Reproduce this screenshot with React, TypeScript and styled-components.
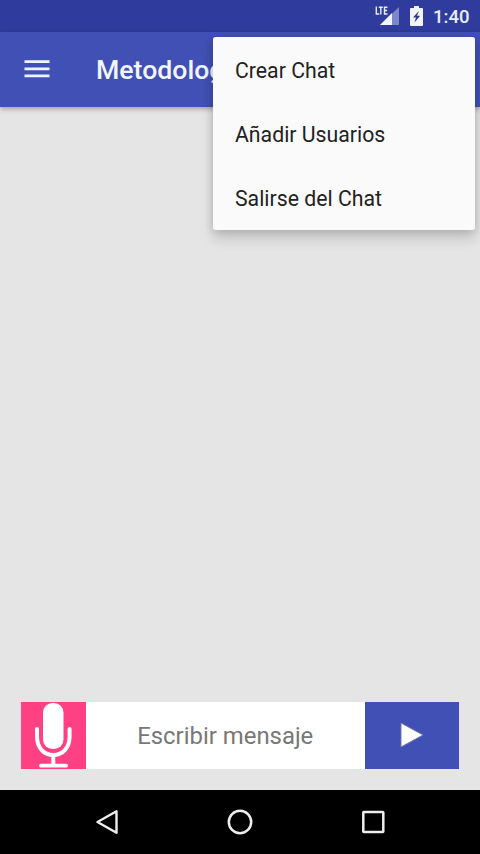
import React from "react";
import styled, { createGlobalStyle } from "styled-components";

const GlobalStyle = createGlobalStyle`
  * { box-sizing: border-box; }
  body { margin: 0; overflow: hidden; font-family: Roboto, "Noto Sans", sans-serif; }
  button { border: 0; padding: 0; background: none; font: inherit; color: inherit; }
  svg { display: block; flex: none; }
`;

const Screen = styled.div`
  position: relative;
  width: 480px;
  height: 854px;
  display: flex;
  flex-direction: column;
  background: #e5e5e5;
`;

const StatusBar = styled.header`
  height: 32px;
  flex: none;
  display: flex;
  align-items: center;
  justify-content: flex-end;
  padding-right: 11px;
  background: #303c9d;
  color: #e9eefc;
`;

const Signal = styled.svg`
  margin-right: 10px;
`;

const Clock = styled.span`
  margin-left: 10px;
  width: 36px;
  padding-top: 1px;
  font-size: 18.5px;
  font-weight: 500;
  line-height: 32px;
  white-space: nowrap;
`;

const AppBar = styled.div`
  height: 74.5px;
  flex: none;
  display: flex;
  align-items: center;
  padding-left: 24px;
  background: #4150b4;
  box-shadow: 0 2px 5px rgba(0, 0, 0, 0.3);
`;

const MenuButton = styled.button`
  width: 26px;
  height: 20px;
`;

const Title = styled.h1`
  margin: 2px 0 0 46px;
  color: #f2f6ff;
  font-size: 26.67px;
  font-weight: 500;
  line-height: 32px;
`;

const Conversation = styled.main`
  flex: 1;
`;

const Composer = styled.form`
  height: 67px;
  flex: none;
  display: flex;
  margin: 0 21px 21px;
`;

const MicButton = styled.button`
  width: 64.5px;
  background: #ff4083;
`;

const MessageInput = styled.input`
  width: 279.5px;
  min-width: 0;
  border: 0;
  padding: 1px 0 0;
  outline: 0;
  background: #fff;
  text-align: center;
  font-family: Roboto, "Noto Sans", sans-serif;
  font-size: 23.9px;
  &::placeholder { color: #777; opacity: 1; }
`;

const SendButton = styled.button`
  flex: 1;
  display: flex;
  align-items: center;
  justify-content: center;
  padding-bottom: 1px;
  background: #4150b4;
`;

const NavBar = styled.nav`
  height: 64px;
  flex: none;
  display: flex;
  align-items: center;
  justify-content: center;
  gap: 105.5px;
  background: #000;
`;

const NavButton = styled.button`
  width: 28px;
  height: 28px;
`;

const PopupMenu = styled.ul`
  position: absolute;
  top: 37px;
  right: 5px;
  width: 262px;
  height: 192.5px;
  margin: 0;
  padding: 0;
  list-style: none;
  background: #fafafa;
  border-radius: 2.5px;
  box-shadow: 0 9px 13px rgba(0, 0, 0, 0.14), 0 1px 8px rgba(0, 0, 0, 0.16);
`;

const PopupItem = styled.li`
  height: 64px;
  padding: 2px 22px 0;
  color: #222;
  font-size: 21.25px;
  line-height: 64px;
`;

const actions = ["Crear Chat", "Añadir Usuarios", "Salirse del Chat"];

export default function App() {
  return (
    <>
      <GlobalStyle />
      <Screen>
        <StatusBar>
          <Signal width="25" height="22" viewBox="0 0 25 22">
            <path d="M24 2v18H5z" fill="#7d87c9" />
            <path d="M17 8v12H5z" fill="#f1f5ff" />
            <path d="M0 0h13v10H0z" fill="#303c9d" />
            <path
              d="M1.300 1.600v7.400h3M3.800 2.200h4M5.800 2.200V9.600M12.400 2.200H9.500V9h3M9.500 5.500h2.600"
              fill="none"
              stroke="#e9eefc"
              strokeWidth="1.4"
            />
          </Signal>
          <svg width="13" height="20" viewBox="0 0 13 20">
            <path d="M4 0h5v2h3q1 0 1 1v16q0 1-1 1H1q-1 0-1-1V3q0-1 1-1h3z" fill="#f1f5ff" />
            <path d="M8.8 5L3 11.6h3L4.5 16.5L10.2 9.8H7z" fill="#303c7d" />
          </svg>
          <Clock>1:40</Clock>
        </StatusBar>
        <AppBar>
          <MenuButton aria-label="Menú">
            <svg width="26" height="20" viewBox="0 0 26 20">
              <path d="M.5 2.7h25M.5 9.8h25M.5 16.9h25" stroke="#eef3ff" strokeWidth="2.7" />
            </svg>
          </MenuButton>
          <Title>Metodolog</Title>
        </AppBar>
        <Conversation />
        <Composer>
          <MicButton type="button" aria-label="Grabar">
            <svg width="64" height="67" viewBox="0 0 64 67">
              <rect x="22" y="1" width="20.5" height="46" rx="9.5" fill="#fff" />
              <path
                d="M16 27v7.500c0 11 6.500 18.500 16.300 18.500s16.300-7.500 16.300-18.500V27M32.300 53v9"
                fill="none"
                stroke="#fff"
                strokeWidth="4"
                strokeLinecap="round"
              />
              <path d="M20 63.700h25" stroke="#fff" strokeWidth="3.800" strokeLinecap="round" />
            </svg>
          </MicButton>
          <MessageInput placeholder="Escribir mensaje" />
          <SendButton type="button" aria-label="Enviar">
            <svg width="24" height="26" viewBox="0 0 24 26">
              <path d="M1 1v24l22-12z" fill="#fff" stroke="#7179b0" strokeWidth="1" />
            </svg>
          </SendButton>
        </Composer>
        <NavBar>
          <NavButton aria-label="Atrás">
            <svg width="28" height="28" viewBox="0 0 28 28">
              <path d="M23.500 3.300v21.400L4.500 14z" fill="none" stroke="#eee" strokeWidth="2.400" strokeLinejoin="round" />
            </svg>
          </NavButton>
          <NavButton aria-label="Inicio">
            <svg width="28" height="28" viewBox="0 0 28 28">
              <circle cx="14" cy="14" r="11.200" fill="none" stroke="#eee" strokeWidth="2.500" />
            </svg>
          </NavButton>
          <NavButton aria-label="Recientes">
            <svg width="28" height="28" viewBox="0 0 28 28">
              <rect x="3.300" y="4" width="20" height="20" rx="0.500" fill="none" stroke="#eee" strokeWidth="2.500" />
            </svg>
          </NavButton>
        </NavBar>
        <PopupMenu>
          {actions.map((label) => (
            <PopupItem key={label}>{label}</PopupItem>
          ))}
        </PopupMenu>
      </Screen>
    </>
  );
}
